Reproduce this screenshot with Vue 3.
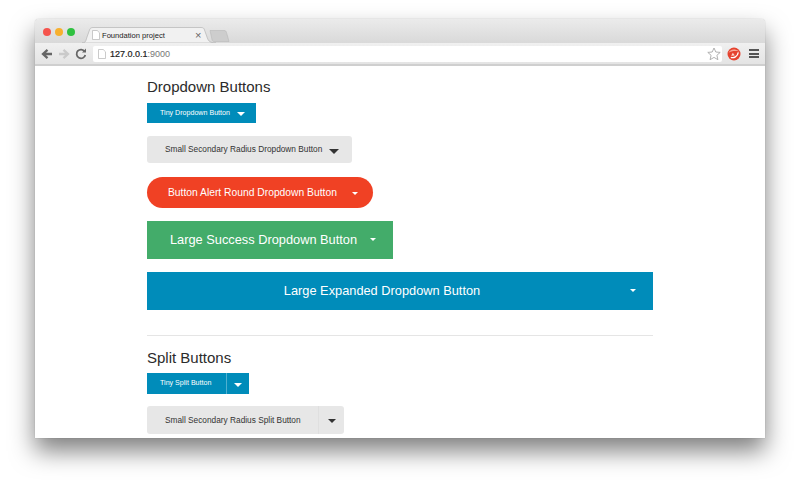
<script setup>
const dropdowns = [
  { label: 'Tiny Dropdown Button', cls: 'tiny primary' },
  { label: 'Small Secondary Radius Dropdown Button', cls: 'small secondary radius' },
  { label: 'Button Alert Round Dropdown Button', cls: 'medium alert round' },
  { label: 'Large Success Dropdown Button', cls: 'large success' },
  { label: 'Large Expanded Dropdown Button', cls: 'large primary expand' }
]
const splits = [
  { label: 'Tiny Split Button', cls: 'tiny primary' },
  { label: 'Small Secondary Radius Split Button', cls: 'small secondary radius' }
]
</script>

<template>
  <div class="stage">
    <div class="window">
      <div class="tabstrip">
        <div class="lights">
          <i class="light red"></i><i class="light yellow"></i><i class="light green"></i>
        </div>
        <div class="tab">
          <svg class="tab-shape" viewBox="0 0 134 16" width="134" height="16" preserveAspectRatio="none">
            <path d="M0 16 C4 16 4 13 5 10 L7.500 3 C8 1 9.500 0.500 11 0.500 L119 0.500 C121 0.500 122 1 122.500 3 L125 10 C126 13 127 16 134 16 Z" fill="#f1f1f1" stroke="#b4b4b4" stroke-width="0.700"/>
          </svg>
          <svg class="doc" viewBox="0 0 8 10" width="8" height="10">
            <path d="M0.500 0.500 H5.200 L7.500 2.800 V9.500 H0.500 Z" fill="#fff" stroke="#b4b4b4" stroke-width="0.700"/>
          </svg>
          <span class="tab-title">Foundation project</span>
          <span class="tab-close">×</span>
        </div>
        <svg class="newtab" viewBox="0 0 22 12" width="22" height="12">
          <path d="M1 0.500 H15 C16.500 0.500 17 1 17.500 2.500 L20 11.500 H5 C4 11.500 3.500 11 3 9.500 Z" fill="#cdcdcd" stroke="#b8b8b8" stroke-width="0.600"/>
        </svg>
      </div>
      <div class="toolbar">
        <svg class="nav" viewBox="0 0 12 12" width="12" height="12">
          <path d="M11 6 H3 M6.500 1.800 L2 6 L6.500 10.200" fill="none" stroke="#666" stroke-width="2.300"/>
        </svg>
        <svg class="nav" viewBox="0 0 12 12" width="12" height="12">
          <path d="M1 6 H9 M5.500 1.800 L10 6 L5.500 10.200" fill="none" stroke="#cacaca" stroke-width="2.300"/>
        </svg>
        <svg class="nav" viewBox="0 0 12 12" width="12" height="12">
          <path d="M9.700 3.500 A4.400 4.400 0 1 0 10.300 7" fill="none" stroke="#666" stroke-width="1.800"/>
          <path d="M7 4.600 H11 V0.600 Z" fill="#666"/>
        </svg>
        <div class="omnibox">
          <svg class="doc" viewBox="0 0 8 10" width="8" height="10">
            <path d="M0.500 0.500 H5.200 L7.500 2.800 V9.500 H0.500 Z" fill="#fff" stroke="#b4b4b4" stroke-width="0.700"/>
          </svg>
          <span class="url"><b>127.0.0.1</b><span class="port">:9000</span></span>
          <svg class="star" viewBox="0 0 14 14" width="14" height="14">
            <path d="M7 1 L8.800 5 L13.200 5.400 L9.900 8.300 L10.900 12.700 L7 10.400 L3.100 12.700 L4.100 8.300 L0.800 5.400 L5.200 5 Z" fill="#fff" stroke="#a8a8a8" stroke-width="0.900"/>
          </svg>
        </div>
        <svg class="ext" viewBox="0 0 14 14" width="14" height="14">
          <circle cx="7" cy="7" r="6.500" fill="#e5432f"/>
          <path d="M1.500 6 C3 2.500 7 1 12.300 4.500 C8 3.500 4 4 1.500 6 Z" fill="#f7a99a"/>
          <path d="M3.800 10.300 C6.800 11.400 10.600 9.600 11.300 5.400" fill="none" stroke="#fff" stroke-width="1.300"/>
          <path d="M5.800 5.800 L7.800 8.400 L4.200 8.800 Z" fill="#fbd6cd"/>
        </svg>
        <div class="menu"><i></i><i></i><i></i></div>
      </div>
      <main class="page">
        <h4 class="first">Dropdown Buttons</h4>
        <a v-for="b in dropdowns" :key="b.label" class="button dropdown" :class="b.cls">
          {{ b.label }}<i class="caret"></i>
        </a>
        <hr />
        <h4>Split Buttons</h4>
        <a v-for="b in splits" :key="b.label" class="button split" :class="b.cls">
          {{ b.label }}<span class="split-part"><i class="caret"></i></span>
        </a>
      </main>
    </div>
  </div>
</template>

<style>
html, body { margin: 0; background: #fff; }
</style>

<style scoped>
.stage {
  width: 800px;
  height: 489px;
  padding: 19px 35px 0;
  box-sizing: border-box;
  overflow: hidden;
  background: #fff;
  font-family: "Liberation Sans", Arial, sans-serif;
}
.window {
  width: 730px;
  height: 419px;
  border-radius: 4px 4px 0 0;
  overflow: hidden;
  display: flex;
  flex-direction: column;
  background: #fff;
  box-shadow: 0 13px 24px rgba(0, 0, 0, 0.5), 0 0 1px rgba(0, 0, 0, 0.35);
}
.tabstrip {
  height: 24px;
  flex: none;
  display: flex;
  align-items: flex-end;
  background: linear-gradient(#ebebeb, #d9d9d9);
}
.lights {
  display: flex;
  gap: 4px;
  padding: 0 0 7px 8px;
}
.light { width: 8px; height: 8px; border-radius: 50%; display: block; }
.light.red { background: #f5544d; }
.light.yellow { background: #f7b02e; }
.light.green { background: #2fc140; }
.tab {
  position: relative;
  width: 134px;
  height: 16px;
  margin-left: 7px;
  display: flex;
  align-items: center;
  padding-left: 10px;
  box-sizing: border-box;
}
.tab-shape { position: absolute; left: 0; top: 0; }
.tab .doc { position: relative; flex: none; }
.tab-title {
  position: relative;
  margin-left: 2px;
  font-size: 7.600px;
  color: #222;
  width: 93px;
  white-space: nowrap;
}
.tab-close {
  position: relative;
  font-size: 11px;
  color: #666;
  line-height: 1;
}
.newtab { margin-left: -7px; margin-bottom: 1px; flex: none; position: relative; }
.toolbar {
  height: 23px;
  flex: none;
  display: flex;
  align-items: center;
  padding: 0 6px 0 6px;
  box-sizing: border-box;
  background: linear-gradient(#f0f0f0, #e4e4e4);
  border-bottom: 2px solid #cfcfcf;
}
.nav { flex: none; margin-right: 5px; }
.nav:nth-child(3) { margin-right: 6px; }
.omnibox {
  width: 629px;
  height: 16px;
  flex: none;
  background: #fff;
  border-radius: 2px;
  display: flex;
  align-items: center;
  padding: 0 1px 0 5px;
  box-sizing: border-box;
}
.url {
  margin-left: 4px;
  font-size: 9px;
  flex: 1;
  color: #222;
}
.url b { font-weight: 400; -webkit-text-stroke: 0.2px #222; }
.port { color: #777; }
.star { flex: none; }
.ext { flex: none; margin-left: 5px; }
.menu {
  margin-left: 8px;
  width: 10px;
  display: flex;
  flex-direction: column;
  gap: 1.200px;
}
.menu i { height: 2px; background: #555; display: block; }
.page {
  flex: 1;
  overflow: hidden;
  padding: 0 112px;
}
h4 {
  margin: 0;
  font-size: 15px;
  font-weight: 400;
  line-height: 20px;
  color: #2b2b2b;
}
h4.first { margin-top: 11px; margin-bottom: 6px; }
hr {
  margin: 25px 0 12px;
  border: 0;
  height: 1px;
  background: #e5e5e5;
}
h4:not(.first) { margin-bottom: 5px; }
.button {
  display: block;
  width: fit-content;
  box-sizing: border-box;
  position: relative;
  white-space: nowrap;
}
.caret {
  display: inline-block;
  width: 0;
  height: 0;
  border-style: solid;
  border-color: currentColor transparent transparent;
}
.primary { background: #008cba; color: #fff; }
.secondary { background: #e7e7e7; color: #333; }
.alert { background: #f04124; color: #fff; }
.success { background: #43ac6a; color: #fff; }
.radius { border-radius: 3px; }
.round { border-radius: 16px; }
.tiny {
  height: 20px;
  line-height: 20px;
  font-size: 7.100px;
  padding-left: 13px;
  margin-bottom: 13px;
}
.small {
  height: 27px;
  line-height: 27px;
  font-size: 8.300px;
  padding-left: 18px;
  margin-bottom: 14px;
}
.medium {
  height: 31px;
  line-height: 31px;
  font-size: 10.300px;
  padding-left: 21px;
  margin-bottom: 13px;
}
.large {
  height: 38px;
  line-height: 38px;
  font-size: 12.800px;
  padding-left: 23px;
  margin-bottom: 13px;
}
.dropdown.tiny { width: 109px; }
.dropdown.small { width: 205px; }
.dropdown.medium { width: 226px; }
.dropdown.large { width: 246px; }
.dropdown.expand { width: 506px; padding-left: 0; padding-right: 36px; text-align: center; }
.dropdown .caret { position: absolute; top: 50%; }
.dropdown.tiny .caret { right: 11px; margin-top: -1px; border-width: 4px 4px 0; }
.dropdown.small .caret { right: 13px; margin-top: -1px; border-width: 5px 5px 0; }
.dropdown.medium .caret { right: 15px; margin-top: -1px; border-width: 3.500px 3.500px 0; }
.dropdown.large .caret { right: 17px; margin-top: -2px; border-width: 3px 3px 0; }
.split { padding-right: 0; }
.split.tiny { width: 102px; height: 21px; margin-bottom: 12px; }
.split.small { width: 197px; height: 28px; line-height: 28px; }
.split-part {
  position: absolute;
  top: 0;
  right: 0;
  bottom: 0;
  display: flex;
  align-items: center;
  justify-content: center;
}
.split.tiny .split-part { width: 23px; border-left: 1px solid #4fb0d0; box-sizing: border-box; }
.split.small .split-part { width: 26px; border-left: 1px solid #dfdfdf; box-sizing: border-box; }
.split.tiny .caret { border-width: 4px 4px 0; margin-top: 2px; }
.split.small .caret { border-width: 4.500px 4.500px 0; margin-top: 2px; }
</style>
